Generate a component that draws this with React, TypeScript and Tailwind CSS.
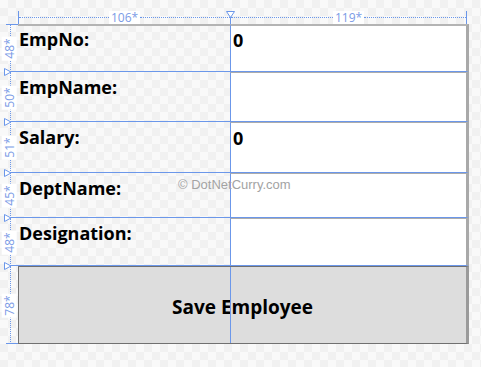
import React from 'react';

// rows of the xaml grid, heights as the designer shows them
const ROWS = [
  { label: 'EmpNo:', value: '0', h: 48 },
  { label: 'EmpName:', value: '', h: 50 },
  { label: 'Salary:', value: '0', h: 51 },
  { label: 'DeptName:', value: '', h: 45 },
  { label: 'Designation:', value: '', h: 48 },
];

const BLUE = '#6b97ea';

function RulerCell({ h, first, last, marker }: { h: number; first?: boolean; last?: boolean; marker?: boolean }) {
  return (
    <div className="relative w-[18px] shrink-0 flex items-center justify-center">
      {/* dotted guide */}
      <div className="absolute left-[10px] top-0 bottom-0 border-l border-dotted border-[#6b97ea]" />
      {first && <div className="absolute left-[6px] right-0 top-0 h-px bg-[#6b97ea]" />}
      <div className={`absolute left-[6px] right-0 bottom-0 h-px ${last ? 'bg-[#6b97ea]' : 'bg-[#6b97ea]'}`} />
      <span className="relative -rotate-90 bg-white px-[2px] text-[12px] leading-[15px] text-[#7b9be6] whitespace-nowrap">
        {h}*
      </span>
      {marker && (
        <svg className="absolute left-[4px] -bottom-[4px]" width="8" height="8" viewBox="0 0 8 8">
          <path d="M0.5 0.5 L7 4 L0.5 7.5 Z" fill="white" stroke={BLUE} strokeWidth="1" />
        </svg>
      )}
    </div>
  );
}

function RulerSegment({ text, width }: { text: string; width: string }) {
  return (
    <div className={`${width} h-full flex items-center border-l border-[#6b97ea]`}>
      <div className="flex-1 border-t border-dotted border-[#6b97ea]" />
      <span className="bg-white px-[2px] h-full flex items-center text-[12px] leading-[13px] text-[#7b9be6]">{text}</span>
      <div className="flex-1 border-t border-dotted border-[#6b97ea]" />
    </div>
  );
}

export default function App() {
  return (
    <div
      className="relative w-[481px] h-[367px] overflow-hidden bg-[#f7f7f7] bg-[image:repeating-conic-gradient(#f1f1f1_0%_25%,#f9f9f9_0%_50%)] bg-[length:16px_16px] pt-[11px] flex flex-col"
      style={{ fontFamily: '"Open Sans", "Noto Sans", sans-serif' }}
    >
      {/* column ruler */}
      <div className="ml-[18px] h-[13px] flex">
        <RulerSegment text="106*" width="w-[212px]" />
        <div className="w-[237px] h-full flex border-r border-[#6b97ea] relative">
          <RulerSegment text="119*" width="w-full" />
          <svg className="absolute -left-[4px] top-0" width="9" height="7" viewBox="0 0 9 7">
            <path d="M0.5 0.5 L8.5 0.5 L4.5 6.5 Z" fill="white" stroke={BLUE} strokeWidth="1" />
          </svg>
        </div>
      </div>

      {/* the form grid */}
      {ROWS.map((r, i) => (
        <div key={r.label} className="flex" style={{ height: r.h }}>
          <RulerCell h={r.h} first={i === 0} marker />
          <div
            className={`w-[212px] shrink-0 border-b border-[#6b97ea] pl-[1px] text-[18px] font-bold leading-[24px] text-black ${
              i === 0 ? 'border-t-2 border-t-[#b4b4b4] pt-[1px]' : 'pt-[3px]'
            }`}
          >
            {r.label}
          </div>
          <div
            className={`w-[239px] shrink-0 bg-white border-l border-l-[#6b97ea] border-r-[3px] border-r-[#a9a9a9] border-b border-b-[#6b97ea] pl-[2px] text-[18px] font-bold leading-[24px] text-black ${
              i === 0 ? 'border-t-2 border-t-[#b4b4b4] pt-[2px]' : 'border-t border-t-[#acacac] pt-[3px]'
            }`}
          >
            {r.value}
          </div>
        </div>
      ))}
      <div className="flex h-[78px]">
        <RulerCell h={78} last />
        <button className="relative w-[451px] shrink-0 bg-[#dddddd] border border-[#707070] border-r-[3px] border-r-[#9a9a9a] text-[19px] font-bold text-black pt-[4px]">
          Save Employee
          {/* column guide running through the button */}
          <span className="absolute left-[211px] top-0 bottom-0 w-px bg-[#6b97ea]" />
        </button>
      </div>

      {/* watermark */}
      <div
        className="absolute left-[178px] top-[175px] text-[13px] text-[#a3a3a3]"
        style={{ fontFamily: '"Liberation Sans", Arial, sans-serif' }}
      >
        © DotNetCurry.com
      </div>
    </div>
  );
}
